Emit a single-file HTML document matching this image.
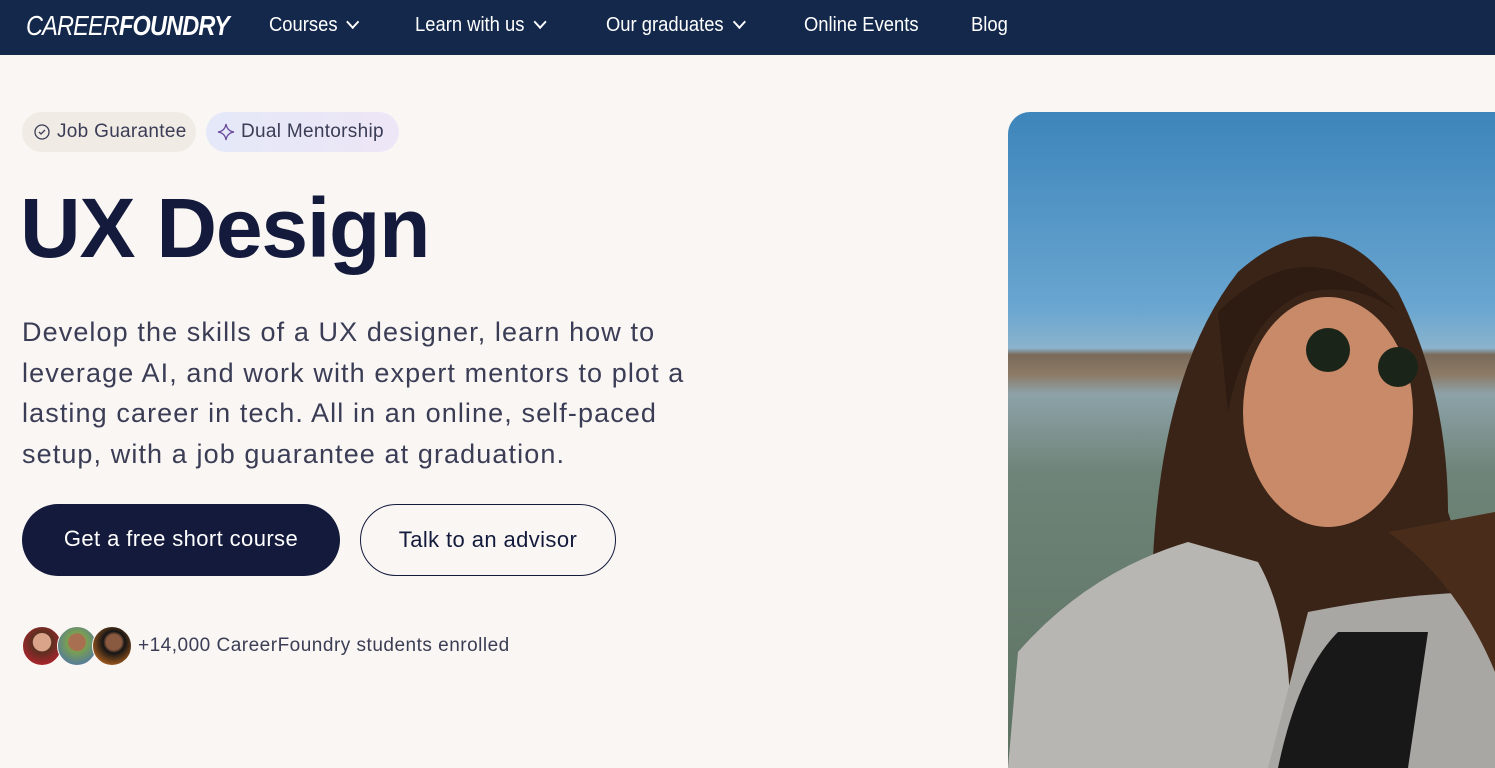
<!DOCTYPE html>
<html><head><meta charset="utf-8"><style>
*{margin:0;padding:0;box-sizing:border-box}
body{width:1495px;height:768px;overflow:hidden;background:#faf6f3;font-family:"Liberation Sans",sans-serif;position:relative}
nav{position:absolute;top:0;left:0;width:1495px;height:55px;background:#13284b;color:#fff}
.logo{position:absolute;left:26px;top:10px;font-size:28px;font-style:italic;letter-spacing:-1px;transform:scaleX(.84);transform-origin:left}
.logo b{font-weight:900}
.ni{position:absolute;top:14px;font-size:20px;transform:scaleX(.92);transform-origin:left}
.ch{display:inline-block;width:10px;height:10px;border-right:2px solid #fff;border-bottom:2px solid #fff;transform:rotate(45deg);margin-left:12px;position:relative;top:-4px}
.pill{position:absolute;top:112px;height:40px;border-radius:20px;font-size:19px;letter-spacing:.3px;color:#3a3d55;line-height:40px;padding-left:35px;white-space:nowrap}
h1{position:absolute;left:20px;top:180px;font-size:84px;font-weight:700;color:#131a3c;letter-spacing:-1.2px}
p{position:absolute;left:22px;top:312px;font-size:27px;line-height:40.5px;color:#3a3d55;white-space:nowrap;letter-spacing:1.1px}
.b{position:absolute;top:504px;height:72px;border-radius:36px;font-size:22px;letter-spacing:.4px;line-height:70px;text-align:center}
.av{position:absolute;top:626px;width:40px;height:40px;border-radius:50%;border:1px solid #faf6f3}
.photo{position:absolute;left:1008px;top:112px;width:487px;height:656px;border-top-left-radius:22px;overflow:hidden;background:linear-gradient(180deg,#3d85bb 0%,#6aa6d0 30%,#8ab3cc 36%,#7a6a5a 37%,#8c7a66 40%,#8da2a8 43%,#6e8478 55%,#5c7160 100%)}
</style></head><body>
<nav>
<div class="logo">CAREER<b>FOUNDRY</b></div>
<div class="ni" style="left:269px">Courses<span class="ch"></span></div>
<div class="ni" style="left:415px">Learn with us<span class="ch"></span></div>
<div class="ni" style="left:606px">Our graduates<span class="ch"></span></div>
<div class="ni" style="left:804px">Online Events</div>
<div class="ni" style="left:971px">Blog</div>
</nav>
<div class="pill" style="left:22px;width:174px;background:#f1ebe6">Job Guarantee
<svg style="position:absolute;left:11px;top:11px" width="18" height="18" viewBox="0 0 18 18" fill="none" stroke="#3a3d55" stroke-width="1.3"><circle cx="9" cy="9" r="7"/><path d="M6 9l2 2 4-4"/></svg></div>
<div class="pill" style="left:206px;width:193px;background:linear-gradient(90deg,#e4e8f8,#ede6f6)">Dual Mentorship
<svg style="position:absolute;left:10px;top:10px" width="20" height="20" viewBox="0 0 20 20" fill="none" stroke="#6a4a9a" stroke-width="1.3"><path d="M10 2Q11 9 18 10Q11 11 10 18Q9 11 2 10Q9 9 10 2Z"/></svg></div>
<h1>UX Design</h1>
<p>Develop the skills of a UX designer, learn how to<br>leverage AI, and work with expert mentors to plot a<br>lasting career in tech. All in an online, self-paced<br>setup, with a job guarantee at graduation.</p>
<div class="b" style="left:22px;width:318px;background:#131a3c;color:#fff">Get a free short course</div>
<div class="b" style="left:360px;width:256px;border:1px solid #131a3c;color:#131a3c">Talk to an advisor</div>
<div class="av" style="left:22px;background:radial-gradient(circle at 50% 40%,#d9a48a 30%,#5a3020 32%,#c02030 90%)"></div>
<div class="av" style="left:57px;background:radial-gradient(circle at 50% 40%,#a87050 28%,#7aa050 32%,#4a70b0 90%)"></div>
<div class="av" style="left:92px;background:radial-gradient(circle at 55% 40%,#8a5a40 25%,#151515 35%,#d07020 90%)"></div>
<div style="position:absolute;left:138px;top:635px;font-size:19px;letter-spacing:.5px;color:#3a3d55">+14,000 CareerFoundry students enrolled</div>
<div class="photo">
<svg width="487" height="656" viewBox="0 0 487 656">
<path d="M150 640Q120 300 230 160Q320 80 390 180Q440 280 440 400Q480 520 487 560L487 656Z" fill="#3a2418"/>
<ellipse cx="320" cy="300" rx="85" ry="115" fill="#c88a68"/>
<path d="M210 200Q300 110 390 200Q350 170 300 180Q240 200 220 300Z" fill="#2e1c12"/>
<circle cx="320" cy="238" r="22" fill="#1a2418"/><circle cx="390" cy="255" r="20" fill="#1a2418"/>
<path d="M0 656L10 540Q80 460 180 430L250 450Q290 520 280 656Z" fill="#b8b6b2"/>
<path d="M260 656L300 500Q400 480 487 480L487 656Z" fill="#a9a7a3"/>
<path d="M270 656Q290 560 330 520L420 520L400 656Z" fill="#181818"/>
<path d="M380 420Q450 470 487 560L487 400Z" fill="#4a2c1a"/>
</svg>
</div>
</body></html>
